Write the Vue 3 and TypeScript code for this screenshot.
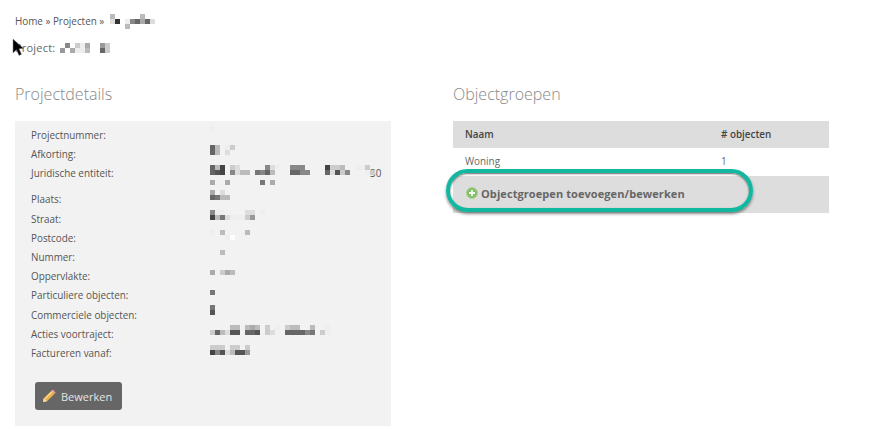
<script setup lang="ts">
// redacted values are a 5px mosaic: one hex digit per cell gives the grey, "." is empty
interface Detail {
  label: string
  top: number
  cells: string[]
  tall?: boolean
  text?: string
}

const details: Detail[] = [
  { label: 'Projectnummer:', top: 0, cells: ['e'] },
  { label: 'Afkorting:', top: -0.2, cells: ['6b.ec', '6b.d'] },
  {
    label: 'Juridische entiteit:',
    top: 0.6,
    tall: true,
    text: '30',
    cells: [
      '6b4.cd.....8de..888....4ccb..eec',
      '654.8dbb.786b...6688...6d5c8...ec',
      '',
      'a..a......7.a'
    ]
  },
  { label: 'Plaats:', top: -0.4, cells: ['a.d', '67bb'] },
  { label: 'Straat:', top: 0.4, cells: ['8ee....dd.e', '4b7deeec9'] },
  { label: 'Postcode:', top: 1.2, cells: ['e.b....b', '...ef'] },
  { label: 'Nummer:', top: 2, cells: ['..b'] },
  { label: 'Oppervlakte:', top: 2.8, cells: ['a.cab'] },
  { label: 'Particuliere objecten:', top: 3.6, cells: ['7'] },
  { label: 'Commerciele objecten:', top: -0.6, cells: ['7', '5'] },
  {
    label: 'Acties voortraject:',
    top: 0.2,
    cells: ['....bb.bab.c.e.cbb..b..e', 'c6bd55.665.cd..666687.ce']
  },
  { label: 'Factureren vanaf:', top: 1, cells: ['ccc.cc.c', '485db559'] }
]

const crumbCells = ['b.....b', 'd3.e86a6d', '...b']
const projectCells = ['.8.cea..9c', '9.aeeb..6c']
const cellSize = 5

function rects(rows: string[]) {
  const out: { x: number; y: number; fill: string }[] = []
  rows.forEach((row, r) => {
    row.split('').forEach((c, i) => {
      if (c !== '.') out.push({ x: i * cellSize, y: r * cellSize, fill: `#${c}${c}${c}` })
    })
  })
  return out
}

function mosaicWidth(rows: string[]) {
  return Math.max(...rows.map((r) => r.length)) * cellSize
}
</script>

<template>
  <div class="page">
    <svg class="cursor" width="14" height="20" viewBox="0 0 14 20">
      <path d="M1 1 L1 15 L4.5 11.8 L7 17.5 L9.5 16.3 L7 10.8 L11.5 10.5 Z" fill="#000" stroke="#888" stroke-width="0.5" />
    </svg>

    <nav class="crumbs">
      <span>Home » Projecten » </span>
      <svg class="mosaic crumb-mosaic" :width="mosaicWidth(crumbCells)" height="15">
        <rect v-for="(c, i) in rects(crumbCells)" :key="i" :x="c.x" :y="c.y" width="5" height="5" :fill="c.fill" />
      </svg>
    </nav>

    <div class="project">
      <span>Project: </span>
      <svg class="mosaic project-mosaic" :width="mosaicWidth(projectCells)" height="10">
        <rect v-for="(c, i) in rects(projectCells)" :key="i" :x="c.x" :y="c.y" width="5" height="5" :fill="c.fill" />
      </svg>
    </div>

    <div class="columns">
      <section>
        <h2>Projectdetails</h2>
        <div class="panel">
          <div v-for="d in details" :key="d.label" class="row" :class="{ tall: d.tall }">
            <span class="label">{{ d.label }}</span>
            <span class="value">
              <span v-if="d.text" class="value-text">{{ d.text }}</span>
              <svg
                class="mosaic"
                :style="{ top: d.top + 'px' }"
                :width="mosaicWidth(d.cells)"
                :height="d.cells.length * cellSize"
              >
                <rect v-for="(c, i) in rects(d.cells)" :key="i" :x="c.x" :y="c.y" width="5" height="5" :fill="c.fill" />
              </svg>
            </span>
          </div>
          <button class="edit" type="button">
            <svg width="14" height="14" viewBox="0 0 14 14">
              <path d="M1 13 L1.8 9.2 L9.4 1.8 L12.6 4.8 L5 12.2 Z" fill="#eeb04a" />
              <path d="M9.4 1.8 L10.8 .6 L13.6 3.4 L12.6 4.8 Z" fill="#e8a9a0" />
              <path d="M1 13 L1.8 9.2 L5 12.2 Z" fill="#f3dfbd" />
              <path d="M3 9.6 L10.2 2.6" stroke="#fbe39b" stroke-width="1.2" />
            </svg>
            Bewerken
          </button>
        </div>
      </section>

      <section class="groups">
        <h2>Objectgroepen</h2>
        <div class="table-head">
          <span class="col-name">Naam</span>
          <span># objecten</span>
        </div>
        <div class="table-row">
          <span class="col-name">Woning</span>
          <span>1</span>
        </div>
        <div class="table-add">
          <svg width="12" height="12" viewBox="0 0 12 12">
            <circle cx="6" cy="6" r="5.5" fill="#86bf68" stroke="#a9d295" />
            <path d="M6 3 V9 M3 6 H9" stroke="#f4f9f0" stroke-width="1.8" />
          </svg>
          <span>Objectgroepen toevoegen/bewerken</span>
        </div>
        <div class="callout"></div>
      </section>
    </div>
  </div>
</template>

<style>
html,
body {
  background: #fff;
}
</style>

<style scoped>
.page {
  position: relative;
  width: 883px;
  height: 429px;
  overflow: hidden;
  box-sizing: border-box;
  padding: 14px 0 0 15px;
  font-family: 'Open Sans', 'Liberation Sans', sans-serif;
  font-size: 9.9px;
  color: #555;
}

.cursor {
  position: absolute;
  left: 12px;
  top: 38px;
  z-index: 2;
}

.crumbs {
  height: 14px;
  line-height: 14px;
  white-space: pre;
}

.mosaic {
  display: block;
  position: absolute;
  left: 0;
  top: 0;
}

.crumb-mosaic {
  left: 110px;
  top: 14px;
}

.project {
  height: 14px;
  margin-top: 13px;
  line-height: 14px;
  font-size: 11px;
  letter-spacing: 0.2px;
  color: #666;
}

.project-mosaic {
  left: 60px;
  top: 43px;
}

.columns {
  display: grid;
  grid-template-columns: 376px 376px;
  column-gap: 62px;
  margin-top: 26px;
}

section {
  position: relative;
}

h2 {
  margin: 0;
  height: 40px;
  line-height: 26px;
  font-size: 16px;
  font-weight: 300;
  color: #888;
}

.panel {
  height: 305px;
  box-sizing: border-box;
  padding: 5px 16px 0;
  background: #f2f2f2;
}

.row {
  display: flex;
  height: 19.2px;
  line-height: 19.2px;
}

.row.tall {
  height: 26px;
}

.label {
  width: 179px;
  flex: none;
}

.value {
  position: relative;
  flex: 1;
}

.value-text {
  position: absolute;
  left: 160px;
  top: 0;
  color: #555;
}

.edit {
  display: flex;
  align-items: center;
  gap: 5px;
  width: 87px;
  height: 28px;
  margin: 19px 0 0 4px;
  padding: 0 0 0 7px;
  border: 0;
  border-radius: 3px;
  background: #666;
  color: #e4e4e4;
  font-family: inherit;
  font-size: 11px;
}

.table-head,
.table-row {
  display: flex;
  align-items: center;
  padding-left: 12px;
}

.table-head {
  height: 27px;
  padding-bottom: 2px;
  box-sizing: border-box;
  background: #ddd;
  font-weight: 600;
  color: #444;
}

.table-row {
  height: 28px;
  padding-bottom: 2px;
  box-sizing: border-box;
  color: #666;
}

.col-name {
  width: 256px;
  flex: none;
}

.table-add {
  display: flex;
  align-items: center;
  gap: 3px;
  height: 37px;
  padding: 0 0 3px 13px;
  box-sizing: border-box;
  background: #ddd;
  font-size: 11px;
  font-weight: 700;
  letter-spacing: 0.08px;
  color: #666;
}

.callout {
  position: absolute;
  left: -7px;
  top: 88px;
  width: 307px;
  height: 43px;
  box-sizing: border-box;
  border: 4px solid #11b89f;
  border-radius: 22px;
  box-shadow:
    0 2px 3px rgba(0, 0, 0, 0.45),
    inset 0 1px 2px rgba(0, 0, 0, 0.6);
}
</style>
